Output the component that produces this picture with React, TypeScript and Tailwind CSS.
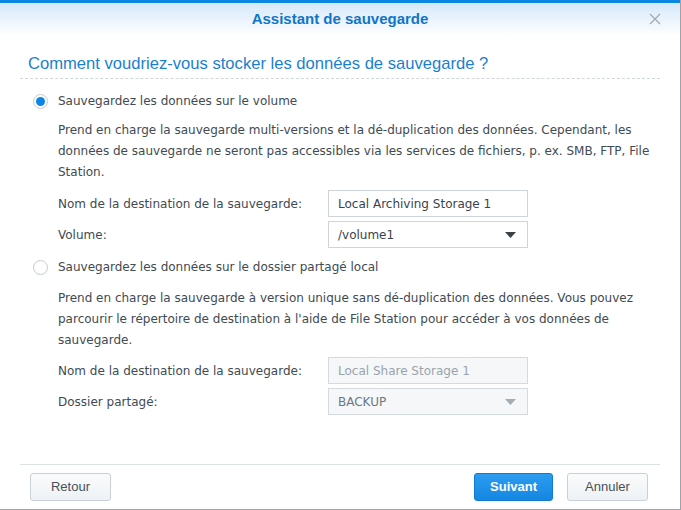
import React from "react";

const body = "font-['DejaVu_Sans',sans-serif] text-[12px] text-[#414a52]";

function Radio({ checked }: { checked: boolean }) {
  return (
    <span className="flex h-[15px] w-[15px] items-center justify-center rounded-full border border-[#c3cbd3] bg-white">
      {checked && <span className="h-[9px] w-[9px] rounded-full bg-[#0b86e6]" />}
    </span>
  );
}

function Field({ label, value, select, disabled }: { label: string; value: string; select?: boolean; disabled?: boolean }) {
  return (
    <div className="flex items-center">
      <div className="w-[270px]">{label}</div>
      <div
        className={
          "flex h-[27px] w-[200px] items-center justify-between border pl-[9px] pr-[11px] " +
          (disabled ? "border-[#d3dae0] bg-[#f5f7f9] text-[#9aa3ab]" : "border-[#cdd4da] bg-white text-[#3a434b]")
        }
      >
        <span className={disabled && select ? "text-[#6e7780]" : ""}>{value}</span>
        {select && (
          <svg width="11" height="6" viewBox="0 0 11 6">
            <path d="M0 0h11L5.5 6z" fill={disabled ? "#a4acb4" : "#3c4146"} />
          </svg>
        )}
      </div>
    </div>
  );
}

export default function App() {
  return (
    <div className={"flex h-[510px] w-[681px] flex-col border-r border-b border-[#9ea3a8] bg-white " + body}>
      <div className="h-[3px] bg-[#0b87e3]" />
      <div className="relative flex h-[33px] items-center justify-center bg-gradient-to-b from-[#d6e8f9] to-white">
        <span className="font-['Liberation_Sans',sans-serif] text-[15px] font-bold text-[#1174c8]">Assistant de sauvegarde</span>
        <svg className="absolute right-[19px] top-[10px]" width="12" height="12" viewBox="0 0 12 12">
          <path d="M1 1l10 10M11 1L1 11" stroke="#a3abb3" strokeWidth="1.4" />
        </svg>
      </div>

      <div className="flex-1 px-[20px]">
        <div className="border-b border-dashed border-[#cfd6dd] pt-[18px] pb-[4px] pl-[8px] font-['Liberation_Sans',sans-serif] text-[16.6px] leading-[20px] text-[#1a7fd0]">
          Comment voudriez-vous stocker les données de sauvegarde ?
        </div>

        <div className="mt-[13px] flex items-center gap-[10px] pl-[13px]">
          <Radio checked />
          <span>Sauvegardez les données sur le volume</span>
        </div>
        <div className="pl-[38px]">
          <p className="mt-[10px] leading-[21px]">
            Prend en charge la sauvegarde multi-versions et la dé-duplication des données. Cependant, les données de sauvegarde ne seront pas accessibles via les services de fichiers, p. ex. SMB, FTP, File Station.
          </p>
          <div className="mt-[7px] flex flex-col gap-[4px]">
            <Field label="Nom de la destination de la sauvegarde:" value="Local Archiving Storage 1" />
            <Field label="Volume:" value="/volume1" select />
          </div>
        </div>

        <div className="mt-[10px] flex items-center gap-[10px] pl-[13px]">
          <Radio checked={false} />
          <span>Sauvegardez les données sur le dossier partagé local</span>
        </div>
        <div className="pl-[38px]">
          <p className="mt-[12px] leading-[21px]">
            Prend en charge la sauvegarde à version unique sans dé-duplication des données. Vous pouvez parcourir le répertoire de destination à l'aide de File Station pour accéder à vos données de sauvegarde.
          </p>
          <div className="mt-[6px] flex flex-col gap-[4px]">
            <Field label="Nom de la destination de la sauvegarde:" value="Local Share Storage 1" disabled />
            <Field label="Dossier partagé:" value="BACKUP" select disabled />
          </div>
        </div>
      </div>

      <div className="mx-[20px] flex items-center border-t border-[#dde2e7] pt-[8px] pb-[8px] font-['Liberation_Sans',sans-serif] text-[13px]">
        <button className="h-[28px] w-[81px] ml-[10px] rounded-[3px] border border-[#c9d0d7] bg-gradient-to-b from-[#fafbfc] to-[#eef2f5] text-[#47505a]">Retour</button>
        <div className="flex-1" />
        <button className="h-[28px] w-[79px] rounded-[3px] border border-[#117bd0] bg-gradient-to-b from-[#2b9cf0] to-[#1587e2] font-bold text-white">Suivant</button>
        <button className="ml-[14px] mr-[12px] h-[28px] w-[81px] rounded-[3px] border border-[#c9d0d7] bg-gradient-to-b from-[#fafbfc] to-[#eef2f5] text-[#47505a]">Annuler</button>
      </div>
    </div>
  );
}
